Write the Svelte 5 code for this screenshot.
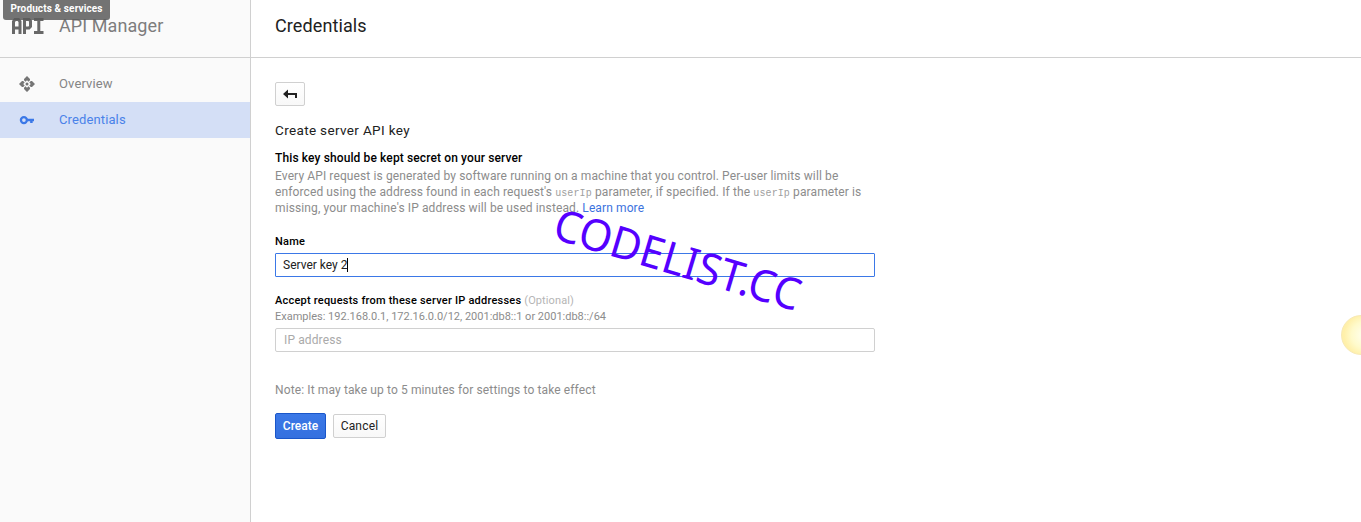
<script>
  let name = 'Server key 2';
  const code = 'userIp';
</script>

<div class="page">
  <aside>
    <div class="brand">
      <svg class="logo" width="32" height="17" viewBox="0 0 32 17" fill="none" stroke="#686868" stroke-width="3">
        <path d="M1.500 16V3.500L3 1.500H6.500L8 3.500V16M1.500 10H8" />
        <path d="M12.500 16V1.500H17L18.500 3V8.500L17 10H12.500" />
        <path d="M22 1.500H31.500M22 14.500H31.500M26.800 1.500V14.500" />
      </svg>
      <span>API Manager</span>
    </div>
    <nav>
      <a class="item">
        <svg width="16" height="16" viewBox="0 0 16 16" fill="#757575">
          <path d="M8 0L11 3V4.200L9.500 5.700L8 4.200L6.500 5.700L5 4.200V3ZM8 16L11 13V11.800L9.500 10.300L8 11.800L6.500 10.300L5 11.800V13ZM0 8L3 5H4.200L5.700 6.500L4.200 8L5.700 9.500L4.200 11H3ZM16 8L13 5H11.800L10.300 6.500L11.800 8L10.300 9.500L11.800 11H13Z" />
          <circle cx="8" cy="8" r="1.500" />
        </svg>
        <span>Overview</span>
      </a>
      <a class="item active">
        <svg width="16" height="16" viewBox="0 0 16 16" fill="none" stroke="#3b78e7">
          <circle cx="4.900" cy="8.100" r="3" stroke-width="2.300" />
          <path d="M8 8.100H15M12.400 8V11" stroke-width="2.500" />
        </svg>
        <span>Credentials</span>
      </a>
    </nav>
  </aside>

  <main>
    <header><h1>Credentials</h1></header>
    <section>
      <button class="btn back" aria-label="Back">
        <svg width="14" height="10" viewBox="0 0 14 10"><path d="M0 5L5 0.500V4H14V9H12V6H5V9.500Z" fill="#212121" /></svg>
      </button>
      <h2>Create server API key</h2>
      <h3 class="l1">This key should be kept secret on your server</h3>
      <p class="desc">
        <span>Every API request is generated by software running on a machine that you control. Per-user limits will be</span><br />
        <span>enforced using the address found in each request's <code>{code}</code> parameter, if specified. If the <code>{code}</code> parameter is</span><br />
        <span>missing, your machine's IP address will be used instead. <a class="link">Learn more</a></span>
      </p>
      <h3 class="name">Name</h3>
      <div class="field focus"><span>{name}</span><i></i></div>
      <h3 class="accept">Accept requests from these server IP addresses <span>(Optional)</span></h3>
      <p class="examples">Examples: 192.168.0.1, 172.16.0.0/12, 2001:db8::1 or 2001:db8::/64</p>
      <div class="field empty"><span>IP address</span></div>
      <p class="note">Note: It may take up to 5 minutes for settings to take effect</p>
      <div class="actions">
        <button class="btn primary">Create</button>
        <button class="btn cancel">Cancel</button>
      </div>
    </section>
  </main>

  <div class="tip">Products &amp; services</div>
  <div class="mark">CODELIST.CC</div>
  <div class="orb"></div>
</div>

<style>
  :global(body) { background: #fff; }
  .page { position: relative; display: flex; width: 100%; height: 522px; overflow: hidden; font-family: Roboto, sans-serif; font-size: 12px; color: #212121; }
  aside { box-sizing: border-box; width: 251px; flex: none; background: #fafafa; border-right: 1px solid #d0d0d0; }
  .brand { box-sizing: border-box; height: 58px; border-bottom: 1px solid #d0d0d0; display: flex; padding: 14px 0 0 12px; font-size: 18px; line-height: 24px; letter-spacing: 0.08px; color: #7d7d7d; }
  .logo { margin: 4px 15px 0 0; }
  nav { padding-top: 8px; }
  .item { display: flex; align-items: center; height: 36px; padding-left: 19px; font-size: 13px; letter-spacing: 0.12px; color: #858585; }
  .item span { margin-left: 24px; padding-bottom: 2px; }
  .active { background: #d4dff6; color: #4a82e9; }
  main { flex: 1; }
  header { box-sizing: border-box; height: 58px; border-bottom: 1px solid #d0d0d0; padding: 14px 24px; }
  h1, h2, h3, p { margin: 0; }
  h1 { font-size: 18px; line-height: 24px; font-weight: 400; letter-spacing: 0.1px; }
  section { width: 600px; padding: 24px; }
  .btn { display: flex; align-items: center; justify-content: center; box-sizing: border-box; border: 1px solid #d0d0d0; border-radius: 2px; background: linear-gradient(#fff, #f8f8f8); padding: 0; font: 12px Roboto, sans-serif; color: #212121; }
  .back { width: 30px; height: 24px; }
  h2 { margin-top: 14px; font-size: 13.5px; line-height: 20px; font-weight: 400; letter-spacing: 0.35px; }
  h3 { font-size: 11px; line-height: 16px; font-weight: 500; letter-spacing: 0.22px; color: #000; white-space: nowrap; }
  .l1 { margin-top: 10px; font-size: 12px; letter-spacing: 0.12px; }
  .desc { margin-top: 2px; line-height: 16px; color: #8c8c8c; white-space: nowrap; letter-spacing: 0.113px; }
  .desc code { font-family: "Liberation Mono", monospace; font-size: 10px; line-height: 1; letter-spacing: 0.12px; color: #a0a0a0; }
  .link { color: #3b72de; }
  .name { margin-top: 18px; }
  .field { box-sizing: border-box; display: flex; align-items: center; width: 600px; height: 24px; border: 1px solid #d0d0d0; border-radius: 2px; padding-left: 7px; background: #fff; }
  .focus { margin-top: 3px; border-color: #3b78e7; border-radius: 1px; }
  .focus i { width: 1px; height: 14px; background: #000; }
  .accept { margin-top: 16px; }
  .accept span { color: #b5b5b5; font-weight: 400; letter-spacing: 0.1px; }
  .examples { font-size: 11px; line-height: 16px; color: #8c8c8c; }
  .empty { margin-top: 3px; padding-left: 8px; color: #aaa; letter-spacing: 0.12px; }
  .note { margin-top: 30px; line-height: 16px; color: #8c8c8c; letter-spacing: 0.12px; }
  .actions { display: flex; align-items: center; gap: 7px; margin-top: 15px; }
  .primary { width: 51px; height: 26px; border-color: #1a56c9; background: linear-gradient(#3b78e7, #3470df); color: #fff; font-weight: 500; }
  .cancel { width: 53px; height: 24px; letter-spacing: 0.2px; }
  .tip { position: absolute; left: 3px; top: -3px; box-sizing: border-box; width: 107px; height: 23px; border-radius: 3px; background: rgba(90, 90, 90, 0.85); color: #fff; font: 700 10px/24px Roboto, sans-serif; letter-spacing: 0.12px; text-align: center; white-space: nowrap; }
  .mark { position: absolute; left: 551px; top: 190.5px; font: 44px/60px "Noto Sans", sans-serif; color: #5500ff; white-space: nowrap; transform-origin: 0 47px; transform: rotate(16.7deg) scaleX(0.958); }
  .orb { position: absolute; left: 1341px; top: 315px; width: 40px; height: 40px; box-sizing: border-box; border-radius: 50%; border: 1px solid #f7e9b5; background: radial-gradient(circle at 60% 50%, #fffee8 10%, #fffacb 45%, #fff0aa 70%); }
</style>
